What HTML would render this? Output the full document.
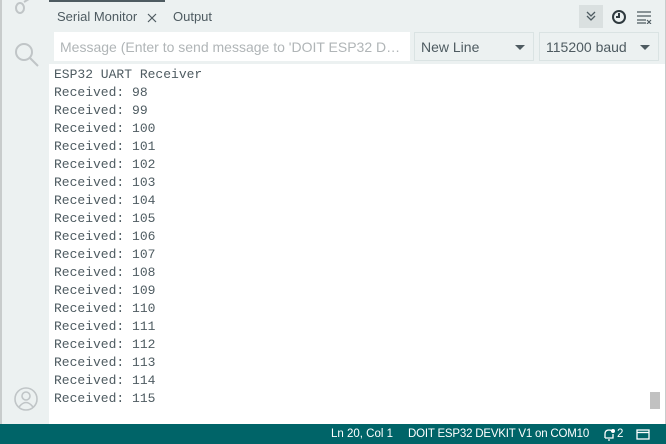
<!DOCTYPE html>
<html><head><style>
*{margin:0;padding:0;box-sizing:border-box}
body{width:666px;height:444px;overflow:hidden;background:#ecf1f1;font-family:"Liberation Sans",sans-serif;position:relative}
.side{position:absolute;left:0;top:0;width:49px;height:424px;background:#ecf1f1;border-left:2px solid #c8cccc}
.tabline{position:absolute;left:49px;top:0;width:116px;height:2px;background:#4e5b61}
.tab{position:absolute;top:9px;font-size:13px;color:#4e5b61}
.input{position:absolute;left:54px;top:32px;width:356px;height:29px;background:#fff;color:#b0b5b7;font-size:14px;padding:7px 6px;white-space:nowrap;overflow:hidden;text-overflow:ellipsis}
.dd{position:absolute;top:32px;height:29px;border:1px solid #dae3e3;background:#ecf1f1;font-size:14px;color:#4e5b61;padding:6px 6px}
.dd:after{content:"";position:absolute;right:8px;top:12px;border-left:5px solid transparent;border-right:5px solid transparent;border-top:5px solid #4e5b61}
.out{position:absolute;left:49px;top:64px;width:616px;height:360px;background:#fff;font-family:"Liberation Mono",monospace;font-size:13px;color:#4e5b61;line-height:18px;padding:2px 0 0 5px;white-space:pre}
.rb{position:absolute;right:0;top:0;width:1px;height:424px;background:#c8cccc}
.status{position:absolute;left:0;top:424px;width:666px;height:20px;background:#006468;color:#fff;font-size:11.5px}
.status span{position:absolute;top:4px}
</style></head><body>
<div class="side">
<svg style="position:absolute;left:8px;top:-6px" width="30" height="22"><g stroke="#c0c5c7" stroke-width="2" fill="none"><ellipse cx="10" cy="14" rx="4" ry="5"/><path d="M14 8 L24 2"/></g></svg>
<svg style="position:absolute;left:10px;top:40px" width="30" height="30"><g stroke="#c0c5c7" stroke-width="2" fill="none"><circle cx="12" cy="12" r="8"/><path d="M18 18 L26 26"/></g></svg>
<svg style="position:absolute;left:11px;top:386px" width="26" height="26"><g stroke="#c0c5c7" stroke-width="1.6" fill="none"><circle cx="13" cy="13" r="11"/><circle cx="13" cy="10" r="4"/><path d="M6 21 Q13 12 20 21"/></g></svg>
</div>
<div class="tabline"></div>
<div class="tab" style="left:57px">Serial Monitor</div>
<svg style="position:absolute;left:147px;top:13px" width="10" height="10"><path d="M1 1L9 9M9 1L1 9" stroke="#4e5b61" stroke-width="1.2"/></svg>
<div class="tab" style="left:173px">Output</div>
<div style="position:absolute;left:579px;top:5px;width:24px;height:23px;background:#dae0e0"></div>
<svg style="position:absolute;left:585px;top:9px" width="12" height="14"><g stroke="#4e5b61" stroke-width="1.3" fill="none"><path d="M2 3 L6 7 L10 3 M2 7 L6 11 L10 7"/></g></svg>
<svg style="position:absolute;left:611px;top:9px" width="16" height="16"><g stroke="#2f3a3f" stroke-width="2" fill="none"><circle cx="8" cy="8" r="6"/><path d="M8 4 V8 H5"/></g></svg>
<svg style="position:absolute;left:636px;top:10px" width="16" height="14"><g stroke="#4e5b61" stroke-width="1.2" fill="none"><path d="M1 2H15M1 6H15M1 10H10M1 13H10M11 10L15 14M15 10L11 14"/></g></svg>
<div class="input">Message (Enter to send message to 'DOIT ESP32 DEVKIT V1' on 'COM10')</div>
<div class="dd" style="left:414px;width:120px">New Line</div>
<div class="dd" style="left:539px;width:120px">115200 baud</div>
<div class="out">ESP32 UART Receiver
Received: 98
Received: 99
Received: 100
Received: 101
Received: 102
Received: 103
Received: 104
Received: 105
Received: 106
Received: 107
Received: 108
Received: 109
Received: 110
Received: 111
Received: 112
Received: 113
Received: 114
Received: 115</div>
<div style="position:absolute;left:650px;top:392px;width:10px;height:17px;background:#c1c1c1"></div>
<div class="rb"></div>
<div class="status">
<span style="left:331px">Ln 20, Col 1</span>
<span style="left:408px;letter-spacing:-0.2px">DOIT ESP32 DEVKIT V1 on COM10</span>
<svg style="position:absolute;left:603px;top:4px" width="12" height="13"><path d="M2 10 V6 Q2 2 6 2 Q8 2 9 3 M10 6 V10 H2 M5 12 H7" stroke="#fff" stroke-width="1.3" fill="none"/><circle cx="10" cy="3" r="2" fill="#fff"/></svg>
<span style="left:617px">2</span>
<svg style="position:absolute;left:636px;top:5px" width="14" height="11"><rect x="1" y="1" width="12" height="9" fill="none" stroke="#fff" stroke-width="1.3"/><path d="M1 3.5H13" stroke="#fff" stroke-width="1.3"/></svg>
</div>
</body></html>
